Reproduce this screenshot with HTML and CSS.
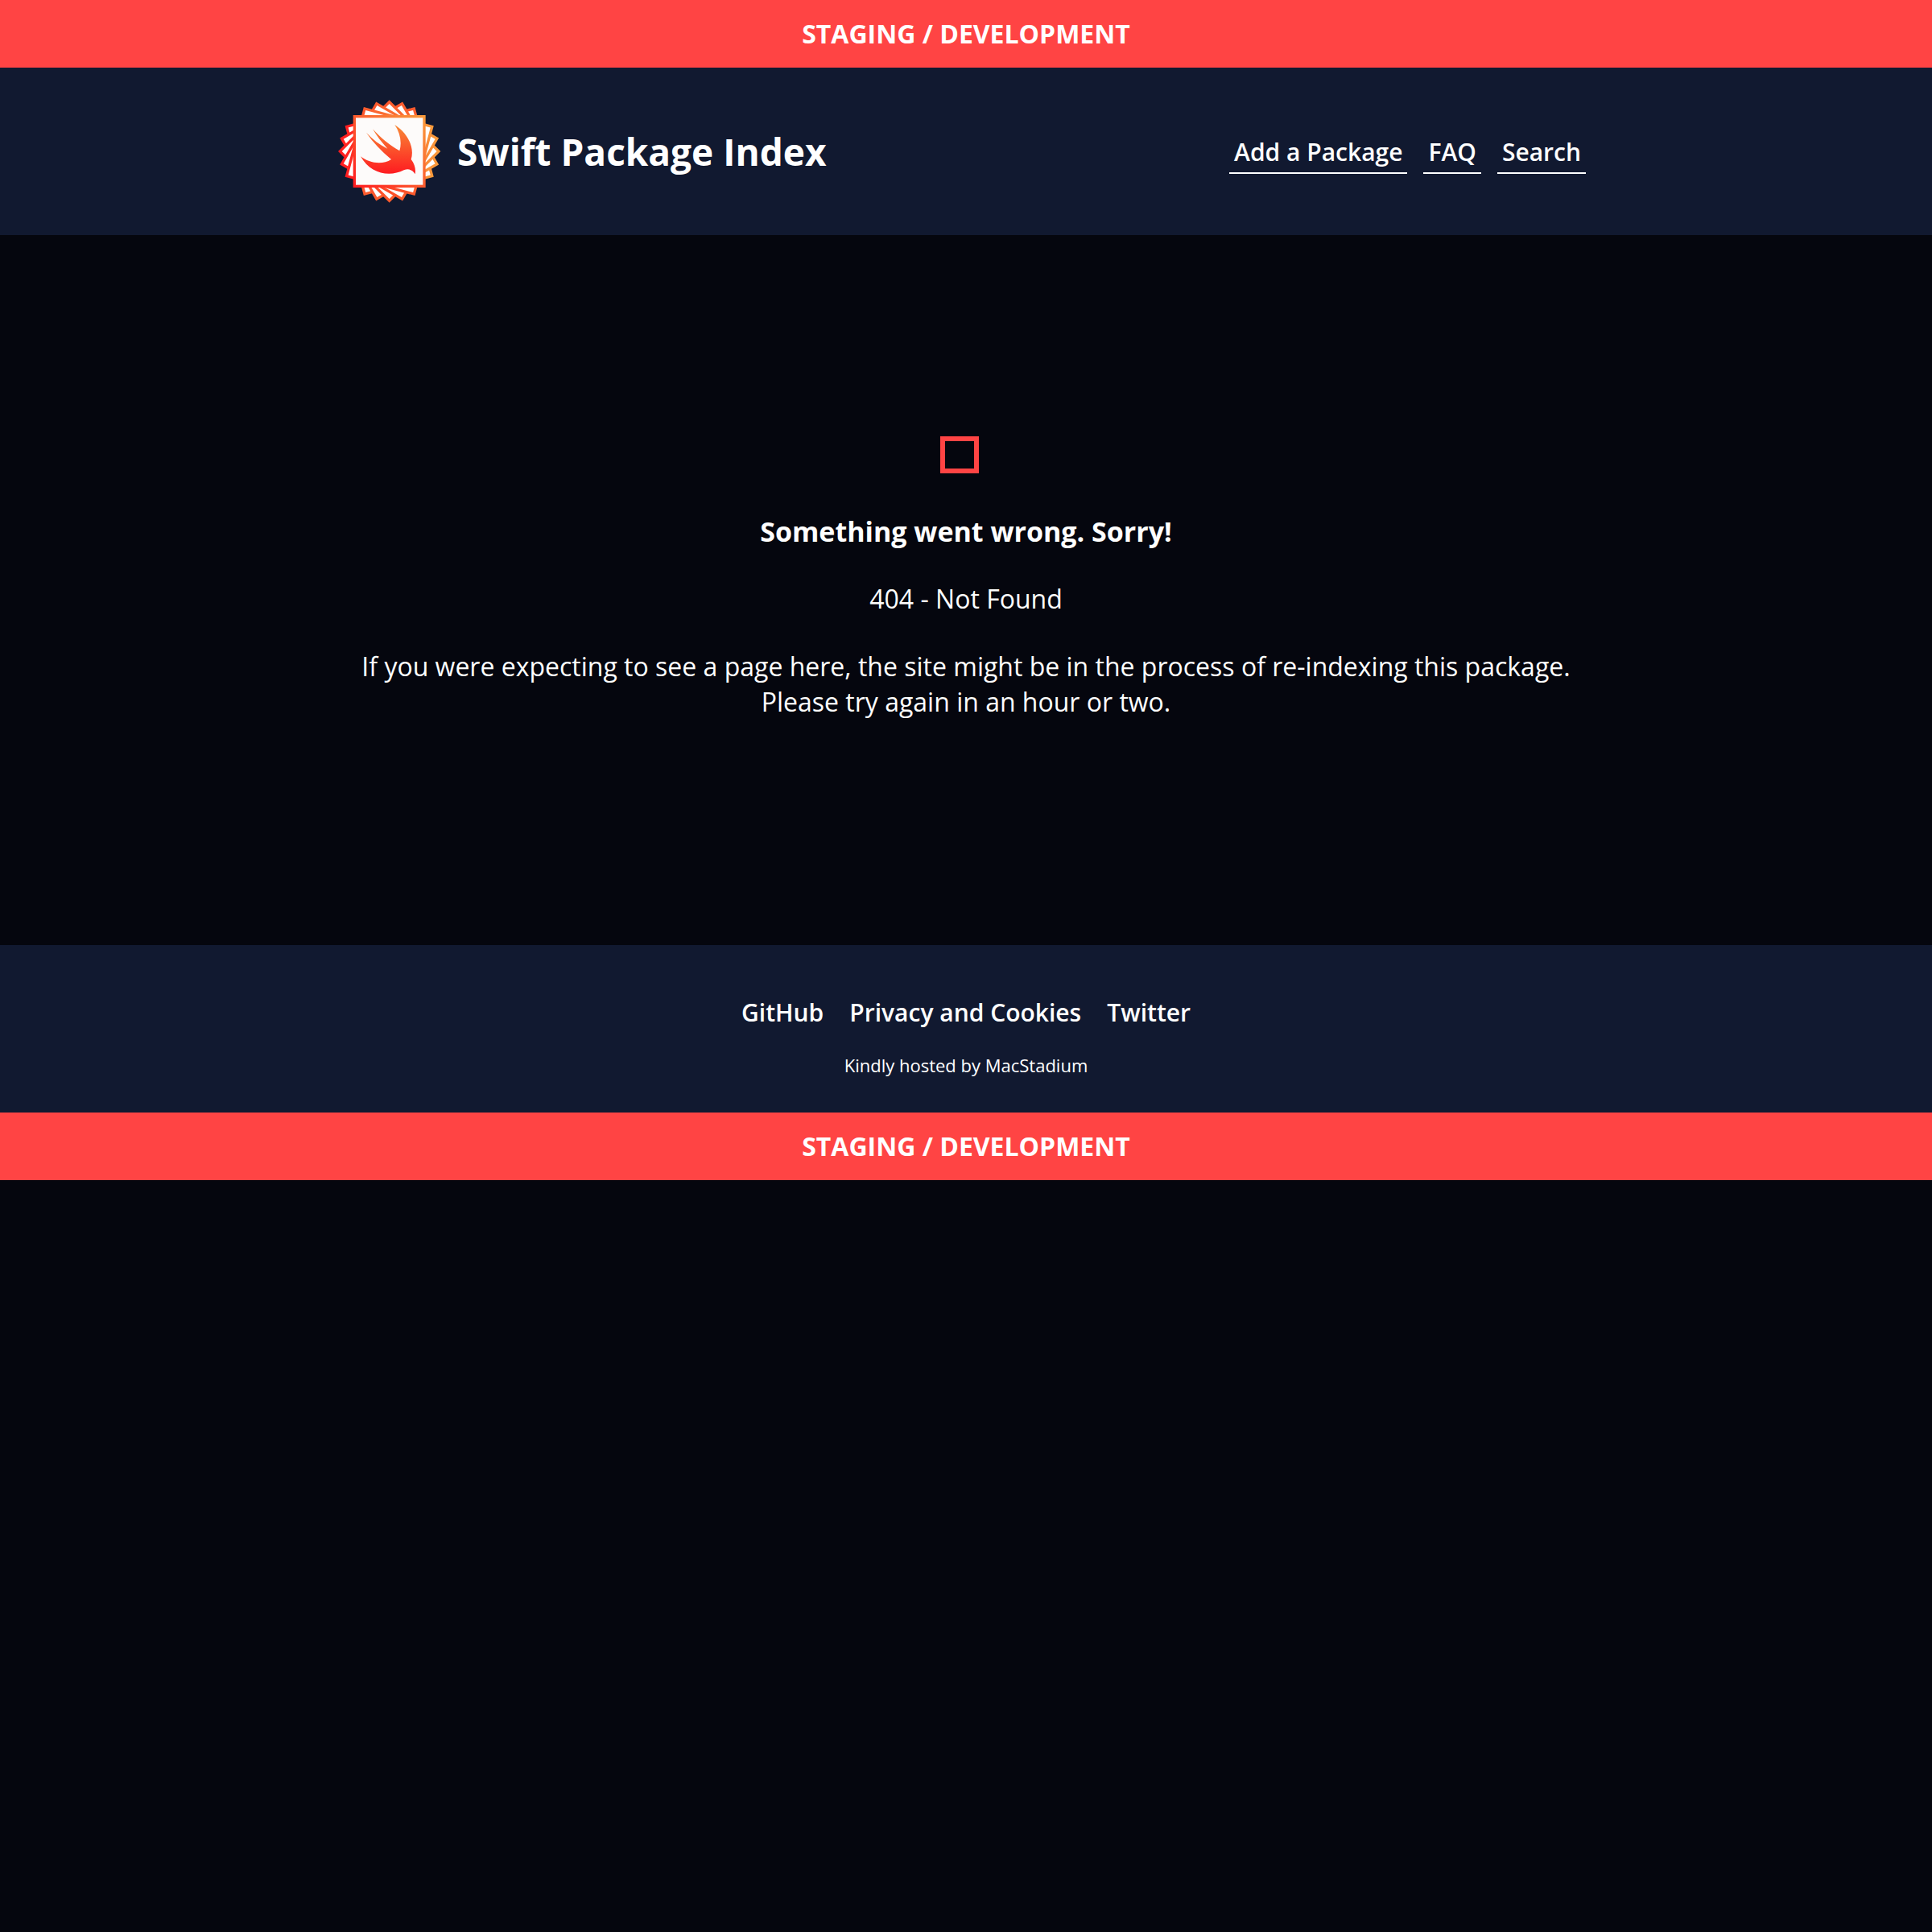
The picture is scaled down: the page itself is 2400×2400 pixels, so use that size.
FILE: index.html
```html
<!DOCTYPE html>
<html lang="en">
<head>
<meta charset="utf-8">
<meta name="viewport" content="width=device-width, initial-scale=1">
<title>Swift Package Index</title>
<link rel="stylesheet" href="styles.css">
</head>
<body>
<div class="staging">STAGING / DEVELOPMENT</div>
<header class="header">
  <div class="inner header-row">
    <h1 class="title">
      <a class="brand" href="/">
        <svg class="logo" viewBox="31 26 384 384" aria-hidden="true">
          <defs>
            <linearGradient id="edge" x1="0" y1="1" x2="1" y2="0">
              <stop offset="0" stop-color="#ff1c20"/>
              <stop offset="1" stop-color="#f99a3b"/>
            </linearGradient>
            <linearGradient id="bird" x1="0" y1="0" x2="0" y2="1">
              <stop offset="0" stop-color="#f88a36"/>
              <stop offset="1" stop-color="#fe1a20"/>
            </linearGradient>
            <rect id="card" x="92" y="88" width="260" height="260" stroke="url(#edge)" stroke-width="10"/>
          </defs>
          <g fill="#fff">
            <use href="#card" transform="rotate(75 222 218)"/>
            <use href="#card" transform="rotate(60 222 218)"/>
            <use href="#card" transform="rotate(45 222 218)"/>
            <use href="#card" transform="rotate(30 222 218)"/>
            <use href="#card" transform="rotate(15 222 218)"/>
          </g>
          <use href="#card" fill="#fdfbfa"/>
          <path fill="url(#bird)" d="M242 119C290 150 317 203 303 248C317 266 321 285 318 303C308 286 294 281 276 288C222 316 150 301 115 237C146 262 196 270 229 248C191 216 160 183 136 148C160 173 186 194 215 208C193 184 175 161 160 135C188 166 222 194 260 216C269 186 263 150 242 119Z"/>
        </svg>
        Swift Package Index
      </a>
    </h1>
    <nav class="nav">
      <a href="/add-a-package">Add a Package</a>
      <a href="/faq">FAQ</a>
      <a href="/search">Search</a>
    </nav>
  </div>
</header>
<main class="inner error">
  <span class="error-icon"></span>
  <h2 class="error-title">Something went wrong. Sorry!</h2>
  <p>404 - Not Found</p>
  <p>If you were expecting to see a page here, the site might be in the process of re-indexing this package. Please try again in an hour or two.</p>
</main>
<footer class="footer">
  <nav class="footer-links">
    <a href="/github">GitHub</a>
    <a href="/privacy">Privacy and Cookies</a>
    <a href="/twitter">Twitter</a>
  </nav>
  <small class="host">Kindly hosted by <a href="/macstadium">MacStadium</a></small>
</footer>
<div class="staging">STAGING / DEVELOPMENT</div>
</body>
</html>
```
FILE: styles.css
```css
* {
  box-sizing: border-box;
}

body {
  margin: 0;
  background: #05060e;
  color: #fff;
  font-family: "Open Sans", sans-serif;
  font-size: 32px;
  line-height: 44px;
}

h1,
h2,
p {
  margin: 0;
}

a {
  color: inherit;
  text-decoration: none;
}

.inner {
  width: 100%;
  max-width: 1560px;
  margin: 0 auto;
}

.staging {
  padding: 20px;
  background: #ff4444;
  font-weight: 700;
  text-align: center;
}

.header {
  padding: 40px 0;
  background: #111930;
}

.header-row {
  display: flex;
  flex-wrap: wrap;
  align-items: center;
  justify-content: space-between;
}

.title {
  font-size: 46px;
  line-height: 64px;
}

.brand {
  display: flex;
  align-items: center;
  gap: 20px;
}

.logo {
  width: 128px;
  height: 128px;
}

.nav {
  display: flex;
  gap: 20px;
  padding-right: 10px;
  font-size: 30px;
  line-height: 40px;
  font-weight: 600;
}

.nav a {
  padding: 9px 6px 5px;
  border-bottom: 2px solid #fff;
}

.error {
  display: flex;
  flex-direction: column;
  align-items: center;
  gap: 40px;
  padding: 250px 20px 280px;
  text-align: center;
}

.error-icon {
  width: 48px;
  height: 46px;
  margin-right: 16px;
  margin-bottom: 10px;
  border: 6px solid #ff4444;
}

.error-title {
  font-size: 34px;
  line-height: 44px;
}

.footer {
  display: flex;
  flex-direction: column;
  align-items: center;
  gap: 30px;
  padding: 64px 20px 44px;
  background: #111930;
}

.footer-links {
  display: flex;
  gap: 32px;
  font-size: 30px;
  line-height: 40px;
  font-weight: 600;
}

.host {
  font-size: 22px;
  line-height: 30px;
}
```
